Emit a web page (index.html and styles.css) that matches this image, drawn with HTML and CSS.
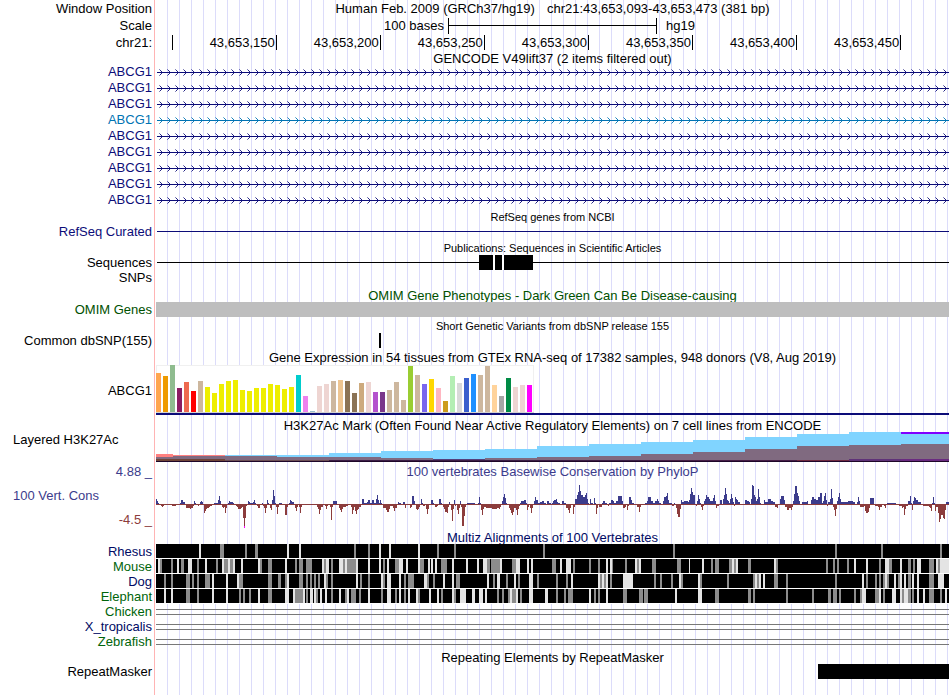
FILE: index.html
```html
<!DOCTYPE html>
<html lang="en">
  <head>
    <meta charset="UTF-8" />
    <meta name="viewport" content="width=device-width, initial-scale=1.0" />
    <title>Human chr21:43,653,093-43,653,473</title>
    <link rel="stylesheet" href="styles.css" />
  </head>
  <body>
    <main class="browser">
      <!-- position, scale and ruler -->
      <header class="ruler">
        <div class="row">
          <span class="label">Window Position</span>
          <h1 class="position">
            <span>Human Feb. 2009 (GRCh37/hg19)</span>
            <span>chr21:43,653,093-43,653,473 (381 bp)</span>
          </h1>
        </div>
        <div class="row">
          <span class="label">Scale</span>
          <div class="scale">
            <span class="scale_size">100 bases</span>
            <span class="scale_bar"></span>
            <span class="scale_db">hg19</span>
          </div>
        </div>
        <div class="row">
          <span class="label">chr21:</span>
          <div class="ticks">
            <span class="tick"></span>
            <span class="tick">43,653,150</span>
            <span class="tick">43,653,200</span>
            <span class="tick">43,653,250</span>
            <span class="tick">43,653,300</span>
            <span class="tick">43,653,350</span>
            <span class="tick">43,653,400</span>
            <span class="tick">43,653,450</span>
          </div>
        </div>
      </header>

      <!-- genes -->
      <section class="track">
        <h2 class="title title_first">GENCODE V49lift37 (2 items filtered out)</h2>
        <div class="row gene navy"><span class="label">ABCG1</span><svg class="plot" viewBox="0 0 793 16" preserveAspectRatio="none"></svg></div>
        <div class="row gene navy"><span class="label">ABCG1</span><svg class="plot" viewBox="0 0 793 16" preserveAspectRatio="none"></svg></div>
        <div class="row gene navy"><span class="label">ABCG1</span><svg class="plot" viewBox="0 0 793 16" preserveAspectRatio="none"></svg></div>
        <div class="row gene blue"><span class="label">ABCG1</span><svg class="plot" viewBox="0 0 793 16" preserveAspectRatio="none"></svg></div>
        <div class="row gene navy"><span class="label">ABCG1</span><svg class="plot" viewBox="0 0 793 16" preserveAspectRatio="none"></svg></div>
        <div class="row gene navy"><span class="label">ABCG1</span><svg class="plot" viewBox="0 0 793 16" preserveAspectRatio="none"></svg></div>
        <div class="row gene navy"><span class="label">ABCG1</span><svg class="plot" viewBox="0 0 793 16" preserveAspectRatio="none"></svg></div>
        <div class="row gene navy"><span class="label">ABCG1</span><svg class="plot" viewBox="0 0 793 16" preserveAspectRatio="none"></svg></div>
        <div class="row gene navy"><span class="label">ABCG1</span><svg class="plot" viewBox="0 0 793 16" preserveAspectRatio="none"></svg></div>
      </section>

      <section class="track">
        <h2 class="title title_small">RefSeq genes from NCBI</h2>
        <div class="row item navy">
          <span class="label">RefSeq Curated</span>
          <svg class="plot" viewBox="0 0 793 15" preserveAspectRatio="none">
            <rect x="1" y="7" width="792" height="1" fill="currentColor" />
          </svg>
        </div>
      </section>

      <section class="track">
        <h2 class="title title_small">Publications: Sequences in Scientific Articles</h2>
        <div class="row item">
          <span class="label">Sequences</span>
          <svg class="plot" viewBox="0 0 793 15" preserveAspectRatio="none">
            <rect x="1" y="7" width="792" height="1" />
            <rect x="323" width="27" height="15" fill="#fff" />
            <path d="M323 0h14v15h-14zM339 0h7v15h-7zM348 0h29v15h-29z" />
          </svg>
        </div>
        <div class="row gene">
          <span class="label">SNPs</span>
        </div>
      </section>

      <section class="track">
        <h2 class="title green">OMIM Gene Phenotypes - Dark Green Can Be Disease-causing</h2>
        <div class="row item">
          <span class="label green">OMIM Genes</span>
          <div class="omim"></div>
        </div>
      </section>

      <section class="track">
        <h2 class="title title_small">Short Genetic Variants from dbSNP release 155</h2>
        <div class="row item">
          <span class="label">Common dbSNP(155)</span>
          <svg class="plot" viewBox="0 0 793 15" preserveAspectRatio="none">
            <rect x="223" width="2" height="15" />
          </svg>
        </div>
      </section>

      <section class="track">
        <h2 class="title">Gene Expression in 54 tissues from GTEx RNA-seq of 17382 samples, 948 donors (V8, Aug 2019)</h2>
        <div class="row expression">
          <span class="label label_plot">ABCG1</span>
          <svg class="plot" id="gtex" viewBox="0 0 793 52" preserveAspectRatio="none"></svg>
        </div>
      </section>

      <!-- regulation and conservation -->
      <section class="track row">
        <span class="label label_plot label_left">Layered H3K27Ac</span>
        <div>
          <h2 class="title title_plot">H3K27Ac Mark (Often Found Near Active Regulatory Elements) on 7 cell lines from ENCODE</h2>
          <svg class="plot plot_marks" id="marks" viewBox="0 0 793 30" preserveAspectRatio="none"></svg>
        </div>
      </section>

      <section class="track row">
        <div class="limits">
          <span>4.88 _</span>
          <span class="limits_name">100 Vert. Cons</span>
          <span class="limits_min">-4.5 _</span>
        </div>
        <div>
          <h2 class="title title_plot slate">100 vertebrates Basewise Conservation by PhyloP</h2>
          <svg class="plot plot_cons" id="phylop" viewBox="0 0 793 50" preserveAspectRatio="none"></svg>
        </div>
      </section>

      <section class="track">
        <h2 class="title midnight">Multiz Alignments of 100 Vertebrates</h2>
        <div class="row item"><span class="label midnight">Rhesus</span><svg class="plot align" data-species="rhesus" viewBox="0 0 793 15" preserveAspectRatio="none"></svg></div>
        <div class="row item"><span class="label forest">Mouse</span><svg class="plot align" data-species="mouse" viewBox="0 0 793 15" preserveAspectRatio="none"></svg></div>
        <div class="row item"><span class="label midnight">Dog</span><svg class="plot align" data-species="dog" viewBox="0 0 793 15" preserveAspectRatio="none"></svg></div>
        <div class="row item"><span class="label forest">Elephant</span><svg class="plot align" data-species="elephant" viewBox="0 0 793 15" preserveAspectRatio="none"></svg></div>
        <div class="row item"><span class="label forest">Chicken</span><div class="gap"></div></div>
        <div class="row item"><span class="label midnight">X_tropicalis</span><div class="gap"></div></div>
        <div class="row item"><span class="label forest">Zebrafish</span><div class="gap"></div></div>
      </section>

      <section class="track">
        <h2 class="title title_last">Repeating Elements by RepeatMasker</h2>
        <div class="row item">
          <span class="label">RepeatMasker</span>
          <svg class="plot" viewBox="0 0 793 15" preserveAspectRatio="none">
            <rect x="662" width="131" height="15" />
          </svg>
        </div>
      </section>
    </main>

    <script src="tracks.js"></script>
  </body>
</html>
```

FILE: styles.css
```css
/* variables */
:root {
  --navy: #0c0c78;
  --blue: #0073b3;
  --green: #005000;
  --forest: #00640a;
  --midnight: #000a64;
  --slate: #3c3c8c;
  --maroon: #8c3c3c;
  --labelWidth: 152px;
}

/* base */
*,
::before,
::after {
  box-sizing: border-box;
  margin: 0;
  padding: 0;
}
body {
  background-color: #fff;
  color: #000;
  font-family: "Liberation Sans", Arial, Helvetica, sans-serif;
  font-size: 13px;
  line-height: 16px;
}

/* pink edge of the label column, then a guide line every 12px */
.browser {
  min-height: 100vh;
  padding-right: 1px;
  background-image: linear-gradient(#ffb4b4, #ffb4b4),
    linear-gradient(#fff, #fff),
    linear-gradient(to right, #fff 11px, #dcdcfa 11px);
  background-size: 1px 100%, 156px 100%, 12px 100%;
  background-position: 154px 0, 0 0, 156px 0;
  background-repeat: no-repeat, no-repeat, repeat;
}

/* colors */
.navy {
  color: var(--navy);
}
.blue {
  color: var(--blue);
}
.green {
  color: var(--green);
}
.forest {
  color: var(--forest);
}
.midnight {
  color: var(--midnight);
}
.slate {
  color: var(--slate);
}

/* rows */
.row {
  display: grid;
  grid-template-columns: var(--labelWidth) 1fr;
  column-gap: 4px;
  align-items: center;
}
.label {
  text-align: right;
  white-space: nowrap;
}
.label_plot {
  padding-top: 2px;
}
.label_left {
  padding-left: 13px;
  text-align: left;
}
.gene {
  height: 16px;
}
.item {
  height: 15px;
  line-height: 15px;
}
.plot {
  display: block;
  width: 100%;
  height: 100%;
  min-height: 0;
  shape-rendering: crispEdges;
}
.title {
  height: 16px;
  margin-left: calc(var(--labelWidth) + 4px);
  padding-top: 2px;
  font-size: 13px;
  font-weight: normal;
  text-align: center;
  white-space: nowrap;
}
.title_first {
  height: 13px;
  padding-top: 0;
}
.title_last {
  height: 15px;
  padding-top: 1px;
}
.title_small {
  padding-top: 1px;
  font-size: 11px;
}
.title_plot {
  margin-left: 0;
}

/* ruler */
.ruler .row {
  height: 17px;
}
.position {
  display: flex;
  justify-content: center;
  gap: 12px;
  font-size: 13px;
  font-weight: normal;
  white-space: nowrap;
}
.scale {
  display: grid;
  grid-template-columns: 292fr 209fr 292fr;
}
.scale_size {
  padding-right: 4px;
  text-align: right;
}
.scale_bar {
  border: solid #000;
  border-width: 0 1px;
  background: linear-gradient(#000, #000) 0 7px / 100% 1px no-repeat;
}
.scale_db {
  padding-left: 9px;
}
/* one fr is one base */
.ticks {
  display: grid;
  grid-template-columns: 8fr repeat(7, 50fr) 23fr;
}
.tick {
  height: 15px;
  padding-right: 1px;
  border-right: 1px solid #000;
  text-align: right;
}

/* single items */
.omim {
  height: 15px;
  background-color: #bebebe;
}
.expression {
  height: 52px;
}
.plot_marks {
  height: 30px;
}
.plot_cons {
  height: 50px;
}
.gap {
  height: 6px;
  border: solid #787878;
  border-width: 1px 0;
}
.limits {
  display: flex;
  flex-direction: column;
  justify-content: space-between;
  height: 100%;
  padding-top: 2px;
  color: var(--slate);
  text-align: right;
}
.limits_name {
  padding-left: 13px;
  text-align: left;
}
.limits_min {
  color: var(--maroon);
}
```

FILE: tracks.js
```js
const WIDTH = 793;

function rect(x, y, width, height, fill) {
  return `<rect x="${x}" y="${y}" width="${width}" height="${height}" fill="${fill}"/>`;
}

// gene models: intron line with strand arrows, the tails of an arrow are lighter
let arrows = "";
let tails = "";
for (let x = 3; x < WIDTH; x += 8) {
  tails += `M${x} 5h1v1h-1zM${x} 11h1v1h-1z`;
  arrows += `M${x + 1} 6h1v1h-1zM${x + 2} 7h1v1h-1zM${x + 2} 9h1v1h-1zM${x + 1} 10h1v1h-1z`;
}
document.querySelectorAll(".gene .plot").forEach((plot) => {
  plot.innerHTML =
    rect(1, 8, 792, 1, "currentColor") +
    `<path d="${tails}" fill="currentColor" fill-opacity="0.5"/>` +
    `<path d="${arrows}" fill="currentColor" fill-opacity="0.9"/>`;
});

// GTEx: one bar for each tissue
const tissueHeights = [
  39, 36, 47, 24, 30, 21, 31, 25, 19, 28, 31, 32, 22, 21, 24, 24, 28, 27,
  23, 25, 37, 16, 1, 26, 28, 31, 32, 31, 19, 29, 30, 20, 20, 22, 30, 12,
  46, 37, 28, 33, 24, 11, 36, 29, 34, 38, 37, 46, 27, 16, 34, 25, 27, 27,
];
const tissueColors = [
  "#ffa54f", "#ee9a00", "#8fbc8f", "#8b1c62", "#ee6a50", "#ff0000", "#cdb79e",
  ...Array(13).fill("#eeee00"),
  "#00cdcd", "#ee82ee", "#9ac0cd", "#eed5d2", "#eed5d2", "#cdb79e", "#eec591",
  "#8b7355", "#8b7355", "#cdaa7d", "#eed5d2", "#b452cd", "#7a378b", "#cdb79e",
  "#cdb79e", "#cdb79e", "#9acd32", "#cdb79e", "#7a67ee", "#ffd700", "#ffb6c1",
  "#cd9b1d", "#b4eeb4", "#d9d9d9", "#3a5fcd", "#1e90ff", "#cdb79e", "#cdb79e",
  "#ffd39b", "#a6a6a6", "#008b45", "#eed5d2", "#eed5d2", "#ff00ff",
];
document.getElementById("gtex").innerHTML =
  rect(0, 1, 378, 48, "#f0f0f0") +
  rect(1, 2, 376, 46, "#fff") +
  rect(0, 48, 378, 1, "#d2d2d2") +
  tissueHeights
    .map((height, i) => rect(i * 7, 48 - height, 5, height, tissueColors[i]))
    .join("") +
  rect(0, 49, 793, 2, "#0c0c78");

// H3K27Ac: x, top and color, each down to the base line
const marks = [
  [0, 22, 17, "#ff8080"], [17, 23, 52, "#ff8080"],
  [69, 23, 104, "#80d4ff"], [173, 21, 52, "#80d4ff"], [225, 19, 52, "#80d4ff"],
  [277, 18, 52, "#80d4ff"], [329, 17, 52, "#80d4ff"], [381, 14, 52, "#80d4ff"],
  [433, 12, 52, "#80d4ff"], [485, 10, 52, "#80d4ff"], [537, 8, 52, "#80d4ff"],
  [589, 5, 52, "#80d4ff"], [641, 2, 52, "#80d4ff"], [693, 0, 52, "#80d4ff"],
  [745, 0, 48, "#8000ff"], [745, 2, 48, "#80d4ff"],
  [0, 25, 17, "#806a80"], [17, 24, 104, "#806a80"], [121, 25, 104, "#806a80"],
  [225, 26, 52, "#806a80"], [277, 27, 52, "#54407c"], [329, 26, 52, "#806a80"],
  [381, 25, 52, "#806a80"], [433, 24, 52, "#806a80"], [485, 22, 52, "#806a80"],
  [537, 20, 52, "#806a80"], [589, 17, 52, "#806a80"], [641, 14, 52, "#806a80"],
  [693, 13, 52, "#806a80"], [745, 12, 48, "#806a80"],
  [0, 27, 69, "#704438"], [69, 28, 104, "#6e5055"], [173, 28, 312, "#3c1e46"],
  [485, 28, 156, "#461e46"], [641, 28, 52, "#702a40"], [693, 27, 52, "#5f3278"],
  [745, 27, 48, "#6a2a80"], [0, 29, 793, "#1e0628"],
];
document.getElementById("marks").innerHTML = marks
  .map(([x, top, width, color]) => rect(x, top, width, 30 - top, color))
  .join("");

// PhyloP: "x,score" pairs, a score holds until the next x
const scores = `
  0,5 1,3 2,1 3,0 5,-2 6,-3 7,-2 8,0 16,-2 20,0 24,1 25,4 27,2 29,0 30,-4 34,-5 35,-4 37,-2
  38,3 39,1 40,0 42,-2 43,0 44,2 45,3 46,2 47,0 48,-9 49,-7 50,-5 51,-4 53,-3 54,-2 56,0
  58,1 62,4 63,8 64,3 65,0 66,-3 67,-4 68,-3 69,-9 70,-4 71,0 72,1 73,3 74,2 77,1 78,0
  80,-2 81,-3 82,-5 85,-4 86,-3 87,-14 88,-23 89,-14 90,-2 91,0 92,3 93,2 94,1 97,2 98,4
  99,1 100,0 101,-2 102,-4 104,0 106,1 107,-2 108,-4 109,-9 110,-4 111,4 112,1 113,0 114,-4
  115,-6 116,4 117,14 118,8 119,1 120,-3 121,-10 122,-3 123,1 126,0 129,-11 131,-3 132,0
  133,1 134,4 135,3 136,2 138,0 139,-4 140,-7 141,-3 142,0 143,-3 144,-9 145,-3 146,0
  161,-3 162,-5 163,-10 164,-6 165,-3 167,0 169,-2 170,-5 171,-2 172,0 174,-3 175,-16
  176,-3 177,3 181,0 183,-4 184,-6 185,-8 186,-5 187,-3 190,-2 192,0 195,-3 196,-10 197,-6
  198,-3 199,-7 200,-10 201,-6 202,-5 203,-3 205,0 206,5 208,1 211,2 212,4 214,1 216,4
  218,1 220,5 221,9 222,4 223,1 224,4 225,1 226,0 227,-4 230,-6 231,-8 233,-5 234,-2
  237,-4 238,-7 239,-4 241,0 242,2 243,1 245,0 247,2 249,-4 250,0 254,-4 255,-3 256,8
  258,3 259,0 260,-5 261,-6 262,-5 263,-3 264,0 265,5 266,1 267,-2 269,0 270,-5 271,-10
  272,-5 273,0 275,4 277,1 278,0 279,-3 281,-2 282,0 283,5 285,1 286,0 287,-3 288,-5
  289,-8 291,-9 292,-3 293,2 294,0 295,-6 296,-17 297,-5 298,4 299,-2 300,0 301,-6 302,-10
  303,-4 304,3 305,-3 306,-22 308,-12 309,-3 310,0 311,1 319,0 322,1 323,7 324,1 325,-6
  326,-11 327,-5 328,-3 330,-4 336,-5 341,-4 343,-5 344,-3 345,0 346,3 347,7 348,10 349,6
  350,1 351,0 353,-4 354,-6 355,-9 356,-11 357,-8 358,-4 360,-6 361,-11 362,-5 363,-2
  364,1 365,3 368,4 370,1 371,-6 372,-3 373,0 374,-4 375,-9 376,-4 377,0 378,3 379,7
  380,4 382,1 384,2 386,3 388,1 390,0 391,3 393,1 395,0 396,1 397,3 398,4 400,5 401,2
  402,1 404,0 406,3 408,1 410,-4 412,-6 413,-9 414,-4 415,0 417,-10 418,-3 419,5 421,9
  422,12 423,19 424,13 425,9 427,7 429,9 430,11 431,5 432,1 433,0 434,5 435,1 437,0
  438,6 439,1 440,-10 441,-4 442,0 443,-3 446,1 447,3 449,1 451,0 452,-2 453,1 455,4
  457,3 458,1 460,3 462,8 466,3 467,-4 469,-3 470,0 471,-6 472,-2 473,7 475,4 476,1 478,0
  481,-3 483,-8 484,-3 485,0 489,1 491,3 492,7 495,3 497,1 499,3 501,5 502,3 503,1 505,0
  507,3 508,7 510,8 511,11 512,4 513,1 516,-2 518,1 519,0 520,-4 521,-10 522,-13 524,-5
  525,4 526,2 528,3 532,2 533,4 534,10 535,16 536,12 537,9 539,0 540,-2 541,3 542,9 543,5
  544,1 545,-3 546,-6 547,-2 548,3 549,5 550,9 551,7 553,5 554,3 557,6 558,9 559,3
  560,-4 561,-2 563,0 564,4 566,0 567,5 568,9 569,16 570,10 571,4 572,3 573,1 574,5
  575,10 576,6 577,2 578,-2 579,7 580,5 581,4 582,2 584,0 589,4 591,3 593,2 594,0 595,5
  596,19 597,18 598,9 599,7 600,3 601,5 602,15 603,7 604,1 605,0 608,4 609,2 612,5 615,3
  617,2 619,-3 621,-4 622,0 624,5 625,8 628,4 629,-3 631,-6 633,-4 635,-6 636,-3 637,3
  638,10 639,18 641,11 642,8 643,3 644,0 646,2 651,3 652,0 655,4 656,7 658,5 660,4 662,7
  664,11 666,1 667,3 668,8 669,11 670,4 671,-2 672,2 674,5 675,15 676,6 677,-3 678,-6
  679,-12 680,-5 681,3 682,7 683,11 684,5 685,2 692,3 697,2 699,0 701,2 702,7 703,3
  704,-3 708,-2 709,-7 710,-9 712,-8 713,-4 714,6 718,0 719,-2 722,-3 723,-6 724,-3 726,0
  728,-2 729,-4 730,0 731,1 740,0 743,-2 746,-4 747,-3 748,-11 749,-5 750,-2 752,3 754,8
  755,1 756,-6 757,3 758,7 759,6 760,4 762,2 765,0 767,-2 773,-3 774,-4 775,-7 776,1
  777,7 778,1 779,-7 780,-3 782,-9 783,-18 784,-15 785,-11 787,-14 788,-15 789,-6 790,2 793,0`
  .trim()
  .split(/\s+/)
  .map((pair) => pair.split(",").map(Number));

let wiggle = rect(0, 26, WIDTH, 1, "#8c3c3c");
scores.forEach(([x, score], i) => {
  const end = i + 1 < scores.length ? scores[i + 1][0] : WIDTH;
  if (score > 0) {
    wiggle += rect(x, 26 - score, end - x, score, "#3c3c8c");
  } else if (score < 0) {
    wiggle += rect(x, 26, end - x, -score, "#8c3c3c");
  }
});
// score below the lower limit
wiggle += rect(88, 48, 1, 2, "#ff00ff");
document.getElementById("phylop").innerHTML = wiggle;

// Multiz: "x" or "x:width" of the bases that align less well (width is 2 by default)
const alignments = {
  rhesus: {
    gray: "64:4 89 99:3 198 212 281 298 387 517 679 725 784",
    light: "43 131 143 223 233 262",
  },
  mouse: {
    gray: `4 15 25:3 41 60 68:4 74:3 104 112:4 139 143:4 150:6 168 175 187 191:9 227 239:4
      264:4 285 287:4 331:3 335:9 356:4 396 398 417 433 442 456:1 469 481 496:4 521:4
      555 559:4 573:3 578 592:3 620 670 677 681 691 723 733:3 752:3 757 773:5 782`,
    light: `2 21 32:4 49 66 72 77 85 102 129 166 170:3 183:4 189 200 212 223 231 243:4 250
      262 272 275 279 296 310 321 327:4 344 360:4 371 375 404 410:5 450 454 479 483
      533:1 546 576 580 618 698 710 729:4 744 761:4 780 784:9`,
  },
  dog: {
    gray: `8 15 30:4 36 41 49:5 83:4 112:4 122:3 129 143:4 150 154 158 162 170 175 204 212
      227 248 252:6 271 277 300:4 337 350 362 381 400 410 444 448 454 498 504 515 525
      544 571 597 601 618:4 630 679 710 719 723 727 731 742 752:3 773:5`,
    light: `56 70 81 131 168 200 225 231:4 243 268:3 287 296 331 341:3 358 373:4 415 442
      446 450 467:10 523 542 599 603 607 706 729 738 744 748 756 761 782:6`,
  },
  elephant: {
    gray: `30:4 41 83 87 93 112:4 139:8 150 160 175 189 195:5 203 225 239 248 262 285 298
      341 346 352 356:4 364 400 408 412:5 438 442 467:4 483:4 488:4 559:4 592:3 597
      630 656 672:3 677:4 683 698 704 719:4 727 746 752:3 756 773:5 784`,
    light: `8 15 56 70 102 129:4 137 147 154:3 158 164 169 183 191 212 231:4 243 252 260
      273 281 296 304:6 316:3 323:4 329 354 360 373:4 389:3 433 450 519 542:4 706:4
      723 736:4 744 748:4 761 767 789`,
  },
};

function bands(list, color) {
  return list
    .split(/\s+/)
    .map((band) => {
      const [x, width = 2] = band.split(":");
      return rect(x, 0, width, 14, color);
    })
    .join("");
}

document.querySelectorAll(".align").forEach((plot) => {
  const { gray, light } = alignments[plot.dataset.species];
  plot.innerHTML =
    rect(0, 0, WIDTH, 15, "#fff") +
    rect(0, 0, WIDTH, 14, "#000") +
    bands(gray, "#8c8c8c") +
    bands(light, "#e4e4e4");
});
```
